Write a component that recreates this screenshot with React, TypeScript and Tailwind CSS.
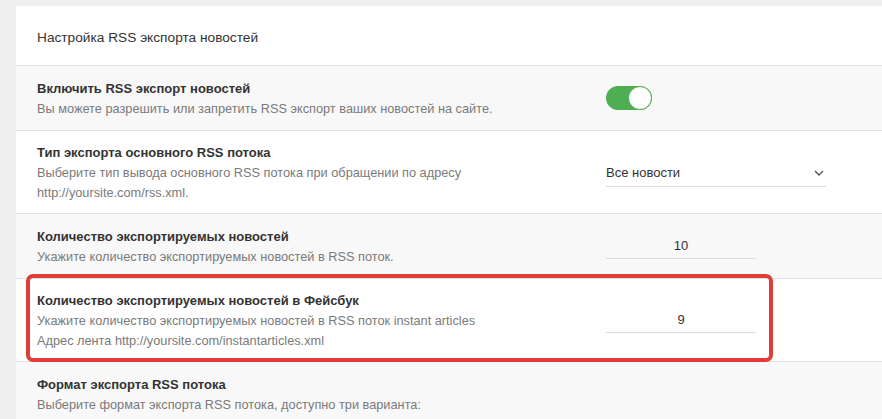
import React from "react";

function Toggle() {
  return (
    <div className="relative w-[46px] h-[24px] rounded-full bg-[#4fae54]">
      <div className="absolute right-0 top-0 w-[24px] h-[24px] rounded-full bg-white border border-[#4fae54]" />
    </div>
  );
}

function Row({
  title,
  desc,
  gray,
  children,
  highlight,
}: {
  title: string;
  desc: string[];
  gray?: boolean;
  children?: React.ReactNode;
  highlight?: boolean;
}) {
  return (
    <div
      className={`relative flex items-center border-b border-[#e2e2e2] pl-[21px] ${
        desc.length > 1 ? "h-[83px]" : "h-[65px]"
      } ${gray ? "bg-[#f8f8f8]" : "bg-white"}`}
    >
      <div className="w-[569px] shrink-0 pt-[1px]">
        <div className="text-[13px] leading-[20px] font-bold text-[#333]">{title}</div>
        {desc.map((d, i) => (
          <div key={i} className="text-[12.75px] leading-[20px] text-[#7a7a7a]">
            {d}
          </div>
        ))}
      </div>
      <div>{children}</div>
      {highlight && (
        <div className="absolute left-[10px] top-[-5px] w-[747px] bottom-[-1px] border-[4px] border-[#df3d38] rounded-[7px] pointer-events-none" />
      )}
    </div>
  );
}

function NumInput({ value }: { value: string }) {
  return (
    <div className="w-[150px] h-[26px] border-b border-[#dcdcdc] text-center text-[13px] leading-[26px] text-[#333]">
      {value}
    </div>
  );
}

export default function App() {
  return (
    <div
      className="w-[882px] h-[419px] overflow-hidden bg-[#efefef] pt-[6px] pl-[16px]"
      style={{ fontFamily: '"Liberation Sans", Arial, sans-serif' }}
    >
      <div className="bg-white h-full">
        <div className="border-b border-[#e2e2e2] pl-[21px] pt-[22px] pb-[17px] text-[13.7px] leading-[20px] text-[#333]">
          Настройка RSS экспорта новостей
        </div>
        <Row
          gray
          title="Включить RSS экспорт новостей"
          desc={["Вы можете разрешить или запретить RSS экспорт ваших новостей на сайте."]}
        >
          <Toggle />
        </Row>
        <Row
          title="Тип экспорта основного RSS потока"
          desc={[
            "Выберите тип вывода основного RSS потока при обращении по адресу",
            "http://yoursite.com/rss.xml.",
          ]}
        >
          <div className="w-[220px] h-[28px] mt-[2px] border-b border-[#dcdcdc] flex items-center justify-between pr-[2px] text-[13px] text-[#333]">
            <span>Все новости</span>
            <svg width="10" height="6" viewBox="0 0 10 6" fill="none" stroke="#555" strokeWidth="1.4">
              <path d="M1 1l4 4 4-4" />
            </svg>
          </div>
        </Row>
        <Row
          gray
          title="Количество экспортируемых новостей"
          desc={["Укажите количество экспортируемых новостей в RSS поток."]}
        >
          <NumInput value="10" />
        </Row>
        <Row
          highlight
          title="Количество экспортируемых новостей в Фейсбук"
          desc={[
            "Укажите количество экспортируемых новостей в RSS поток instant articles",
            "Адрес лента http://yoursite.com/instantarticles.xml",
          ]}
        >
          <NumInput value="9" />
        </Row>
        <Row
          gray
          title="Формат экспорта RSS потока"
          desc={["Выберите формат экспорта RSS потока, доступно три варианта:"]}
        />
      </div>
    </div>
  );
}
